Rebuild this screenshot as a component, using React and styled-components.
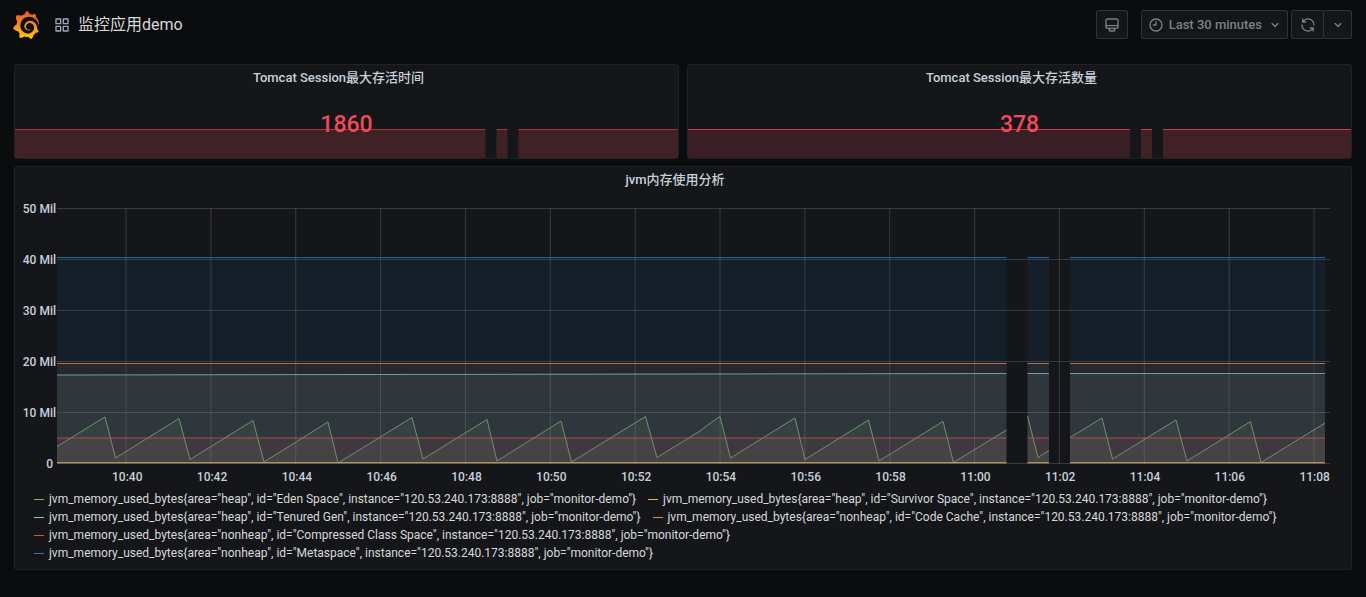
import React from 'react'

import { SiGrafana } from 'react-icons/si'
import styled, { createGlobalStyle } from 'styled-components'


const GlobalStyle = createGlobalStyle`
  * {
    box-sizing: border-box;
  }

  body {
    margin: 0;
    background-color: #0b0c0e;
    color: #c7d0d9;
    font-family: Roboto, 'Noto Sans CJK SC', sans-serif;
    font-size: 13px;
  }
`


const Page = styled.div`
  min-height: 100vh;
  padding: 10px 14px 24px;
`


const Header = styled.header`
  display: flex;
  align-items: center;
  justify-content: space-between;
  height: 29px;
  margin-bottom: 25px;
`


const Brand = styled.div`
  display: flex;
  align-items: center;
  color: #9fa7b3;
`


const LogoLink = styled.a`
  display: flex;
  margin: 0 14px 0 -2px;
`


const Logo = styled(SiGrafana)`
  width: 28px;
  height: 28px;
`


const Gradient = styled.svg`
  position: absolute;
  width: 0;
  height: 0;
`


const Title = styled.h1`
  margin: 0 0 0 8px;
  font-size: 16px;
  font-weight: 400;
  line-height: 24px;
  color: #d8d9da;
`


const IconSvg = styled.svg`
  flex: none;
  width: 16px;
  height: 16px;
  fill: currentColor;
`


const Toolbar = styled.div`
  display: flex;
  gap: 3px;
`


const ToolButton = styled.button`
  display: flex;
  align-items: center;
  justify-content: center;
  width: ${props => props.$width || 'auto'};
  height: 29px;
  padding: ${props => props.$width ? '0' : '0 4px 0 6px'};
  border: 1px solid #2c3235;
  border-radius: 2px;
  background-color: #141619;
  color: #7b8087;
  font-family: inherit;
  font-size: 13px;
  font-weight: 500;
  cursor: pointer;
`


const TvButton = styled(ToolButton)`
  margin-right: 10px;
`


const TimeText = styled.span`
  margin: 0 5px;
`


const ButtonGroup = styled.div`
  display: flex;

  & > * + * {
    margin-left: -1px;
  }
`


const Dashboard = styled.main`
  display: grid;
  grid-template-columns: 1fr 1fr;
  gap: 7px 8px;
`


const Panel = styled.section`
  grid-column: ${props => props.$wide ? '1 / -1' : 'auto'};
  min-width: 0;
  border: 1px solid #202226;
  border-radius: 3px;
  background-color: #141619;
`


const PanelTitle = styled.h2`
  margin: 0;
  padding-right: 16px;
  font-size: 13px;
  font-weight: 500;
  line-height: 26px;
  text-align: center;
`


const StatBody = styled.div`
  display: grid;
  align-items: end;
  height: 67px;

  & > * {
    grid-area: 1 / 1;
  }
`


const Sparkline = styled.svg`
  display: block;
  width: 100%;
  height: 29px;
`


const StatValue = styled.div`
  z-index: 1;
  align-self: center;
  text-align: center;
  font-size: 23px;
  font-weight: 500;
  line-height: 28px;
  color: #f2495c;
`


const Chart = styled.div`
  display: grid;
  grid-template-columns: 42px 1fr;
  padding: 7px 21px 0 0;
  font-size: 12px;
  font-weight: 500;
  line-height: 18px;
`


const YAxis = styled.div`
  display: flex;
  flex-direction: column;
  justify-content: space-between;
  height: 273px;
  padding-right: 1px;
  text-align: right;
  white-space: pre;
`


const Plot = styled.svg`
  display: block;
  width: 100%;
  height: 256px;
  margin-top: 8px;

  path {
    vector-effect: non-scaling-stroke;
  }
`


const XAxis = styled.div`
  grid-column: 2;
  display: flex;
  justify-content: space-between;
  margin-top: -5px;
  padding-left: 55px;
`


const Legend = styled.ul`
  display: flex;
  flex-wrap: wrap;
  column-gap: 12px;
  margin: 0;
  padding: 4px 19px 7px;
  list-style: none;
  font-size: 12px;
  font-weight: 400;
  line-height: 18px;
  color: #d8d9da;
`


const LegendItem = styled.li`
  display: flex;
  align-items: center;
  gap: 5px;
  white-space: nowrap;
`


const Dash = styled.span`
  width: 10px;
  height: 1px;
  background-color: ${props => props.$color};
`


const icons = {
  apps: 'M10,13H3a1,1,0,0,0-1,1v7a1,1,0,0,0,1,1h7a1,1,0,0,0,1-1V14A1,1,0,0,0,10,13ZM9,20H4V15H9ZM21,2H14a1,1,0,0,0-1,1v7a1,1,0,0,0,1,1h7a1,1,0,0,0,1-1V3A1,1,0,0,0,21,2ZM20,9H15V4h5Zm1,4H14a1,1,0,0,0-1,1v7a1,1,0,0,0,1,1h7a1,1,0,0,0,1-1V14A1,1,0,0,0,21,13Zm-1,7H15V15h5ZM10,2H3A1,1,0,0,0,2,3v7a1,1,0,0,0,1,1h7a1,1,0,0,0,1-1V3A1,1,0,0,0,10,2ZM9,9H4V4H9Z',
  monitor: 'M19,2H5A3,3,0,0,0,2,5V15a3,3,0,0,0,3,3H7.64l-.58,1a2,2,0,0,0,0,2,2,2,0,0,0,1.75,1h6.46A2,2,0,0,0,17,21a2,2,0,0,0,0-2l-.59-1H19a3,3,0,0,0,3-3V5A3,3,0,0,0,19,2ZM8.77,20,10,18H14l1.2,2ZM20,15a1,1,0,0,1-1,1H5a1,1,0,0,1-1-1V14H20Zm0-3H4V5A1,1,0,0,1,5,4H19a1,1,0,0,1,1,1Z',
  clock: 'M12,2A10,10,0,1,0,22,12,10,10,0,0,0,12,2Zm0,18a8,8,0,1,1,8-8A8,8,0,0,1,12,20ZM12,6a1,1,0,0,0-1,1v4H8a1,1,0,0,0,0,2h4a1,1,0,0,0,1-1V7A1,1,0,0,0,12,6Z',
  sync: 'M19.91,15.51H15.38a1,1,0,0,0,0,2h2.4A8,8,0,0,1,4,12a1,1,0,0,0-2,0,10,10,0,0,0,16.88,7.23V21a1,1,0,0,0,2,0V16.5A1,1,0,0,0,19.91,15.51ZM12,2A10,10,0,0,0,5.12,4.77V3a1,1,0,0,0-2,0V7.5a1,1,0,0,0,1,1h4.5a1,1,0,0,0,0-2H6.22A8,8,0,0,1,20,12a1,1,0,0,0,2,0A10,10,0,0,0,12,2Z',
  down: 'M17,9.17a1,1,0,0,0-1.41,0L12,12.71,8.46,9.17a1,1,0,0,0-1.41,0,1,1,0,0,0,0,1.42l4.24,4.24a1,1,0,0,0,1.42,0L17,10.59A1,1,0,0,0,17,9.17Z'
}

const stats = [
  {
    title: 'Tomcat Session最大存活时间',
    value: '1860',
    line: '#a03440',
    segments: [
      [0, 470.5, '#402126'],
      [481.5, 492.5, '#402126'],
      [503.5, 663, '#402126']
    ]
  },
  {
    title: 'Tomcat Session最大存活数量',
    value: '378',
    line: '#c33f4e',
    segments: [
      [0, 442, '#3a1e26'],
      [453, 464, '#402126'],
      [475, 663, '#402126']
    ]
  }
]

// every series is a list of runs, the gaps between them are missing scrapes
const flat = (from, to = from) => [
  [[0, from], [949.5, to]],
  [[970.5, to], [992, to]],
  [[1013, to], [1268, to]]
]

const eden = [
  [
    [0, 238.5], [48, 209], [58.5, 250], [122, 210.5], [133, 251.5],
    [196, 212.5], [207, 254], [271, 214], [281, 255], [355, 209.5],
    [366, 251], [430, 211.5], [440, 253], [504, 213], [514.5, 254],
    [588.5, 208.5], [600, 249.5], [643, 223], [652, 216], [663, 208.5],
    [673.5, 250], [738, 210], [748, 251.5], [811.5, 212], [822, 253],
    [886, 213.5], [896.5, 254.5], [949.5, 222]
  ],
  [[970.5, 208], [981, 249.5], [992, 242.5]],
  [
    [1013, 229.5], [1045, 210], [1055.5, 251], [1119, 212], [1130, 253],
    [1193.5, 213.5], [1204, 254.5], [1268, 215]
  ]
]

const series = [
  { area: 'heap', id: 'Eden Space', color: '#7eb26d', runs: eden },
  { area: 'heap', id: 'Survivor Space', color: '#eab839', runs: flat(254.5) },
  { area: 'heap', id: 'Tenured Gen', color: '#6ed0e0', runs: flat(167, 165.5) },
  { area: 'nonheap', id: 'Code Cache', color: '#ef843c', runs: flat(155.5) },
  { area: 'nonheap', id: 'Compressed Class Space', color: '#e24d42', runs: flat(230) },
  { area: 'nonheap', id: 'Metaspace', color: '#1f78c1', runs: flat(49.5) }
]

const yTicks = ['50 Mil', '40 Mil', '30 Mil', '20 Mil', '10 Mil', '0 ']

const xTicks = [
  '10:40', '10:42', '10:44', '10:46', '10:48', '10:50', '10:52', '10:54',
  '10:56', '10:58', '11:00', '11:02', '11:04', '11:06', '11:08'
]

const linePath = run => 'M' + run.map(point => point.join(',')).join('L')

const areaPath = run =>
  `${linePath(run)}L${run[run.length - 1][0]},256L${run[0][0]},256Z`


const Icon = ({ name }) => (
  <IconSvg viewBox="0 0 24 24" aria-hidden="true">
    <path d={icons[name]} />
  </IconSvg>
)


const StatPanel = ({ title, value, segments, line }) => (
  <Panel>
    <PanelTitle>{title}</PanelTitle>
    <StatBody>
      <Sparkline viewBox="0 0 663 29" preserveAspectRatio="none">
        {
          segments.map(([from, to, fill]) => (
            <React.Fragment key={from}>
              <path d={`M${from},0H${to}V29H${from}Z`} fill={fill} />
              <path d={`M${from},0.5H${to}`} stroke={line} />
            </React.Fragment>
          ))
        }
      </Sparkline>
      <StatValue>{value}</StatValue>
    </StatBody>
  </Panel>
)


const MemoryPlot = () => (
  <Plot viewBox="0 0 1273 256" preserveAspectRatio="none">
    <g stroke="#c8c8c8" strokeOpacity="0.2">
      {
        yTicks.map((tick, index) => (
          <path key={tick} d={`M0,${index * 51 + 0.5}H1273`} />
        ))
      }
      {
        xTicks.map((tick, index) => (
          <path key={tick} d={`M${69 + index * 84.86},0V256`} />
        ))
      }
    </g>
    {
      series.map(({ id, color, runs }) => (
        <g key={id}>
          {
            runs.map((run, index) => (
              <React.Fragment key={index}>
                <path d={areaPath(run)} fill={color} fillOpacity="0.1" />
                <path d={linePath(run)} fill="none" stroke={color} strokeOpacity="0.8" />
              </React.Fragment>
            ))
          }
        </g>
      ))
    }
  </Plot>
)


const App = () => (
  <Page>
    <GlobalStyle />
    <Gradient aria-hidden="true">
      <linearGradient id="logo-gradient" x1="0" y1="1" x2="0" y2="0">
        <stop offset="0" stopColor="#fcc80d" />
        <stop offset="0.4" stopColor="#f79a1c" />
        <stop offset="1" stopColor="#f05228" />
      </linearGradient>
    </Gradient>

    <Header>
      <Brand>
        <LogoLink href="#" aria-label="Home">
          <Logo fill="url(#logo-gradient)" />
        </LogoLink>
        <Icon name="apps" />
        <Title>监控应用demo</Title>
      </Brand>

      <Toolbar>
        <TvButton $width="32px" aria-label="Cycle view mode">
          <Icon name="monitor" />
        </TvButton>
        <ToolButton>
          <Icon name="clock" />
          <TimeText>Last 30 minutes</TimeText>
          <Icon name="down" />
        </ToolButton>
        <ButtonGroup>
          <ToolButton $width="33px" aria-label="Refresh">
            <Icon name="sync" />
          </ToolButton>
          <ToolButton $width="29px" aria-label="Refresh interval">
            <Icon name="down" />
          </ToolButton>
        </ButtonGroup>
      </Toolbar>
    </Header>

    <Dashboard>
      {
        stats.map(stat => <StatPanel key={stat.title} {...stat} />)
      }

      <Panel $wide>
        <PanelTitle>jvm内存使用分析</PanelTitle>
        <Chart>
          <YAxis>
            {
              yTicks.map(tick => <span key={tick}>{tick}</span>)
            }
          </YAxis>
          <MemoryPlot />
          <XAxis>
            {
              xTicks.map(tick => <span key={tick}>{tick}</span>)
            }
          </XAxis>
        </Chart>
        <Legend>
          {
            series.map(({ area, id, color }) => (
              <LegendItem key={id}>
                <Dash $color={color} />
                {`jvm_memory_used_bytes{area="${area}", id="${id}", instance="120.53.240.173:8888", job="monitor-demo"}`}
              </LegendItem>
            ))
          }
        </Legend>
      </Panel>
    </Dashboard>
  </Page>
)

export default App
